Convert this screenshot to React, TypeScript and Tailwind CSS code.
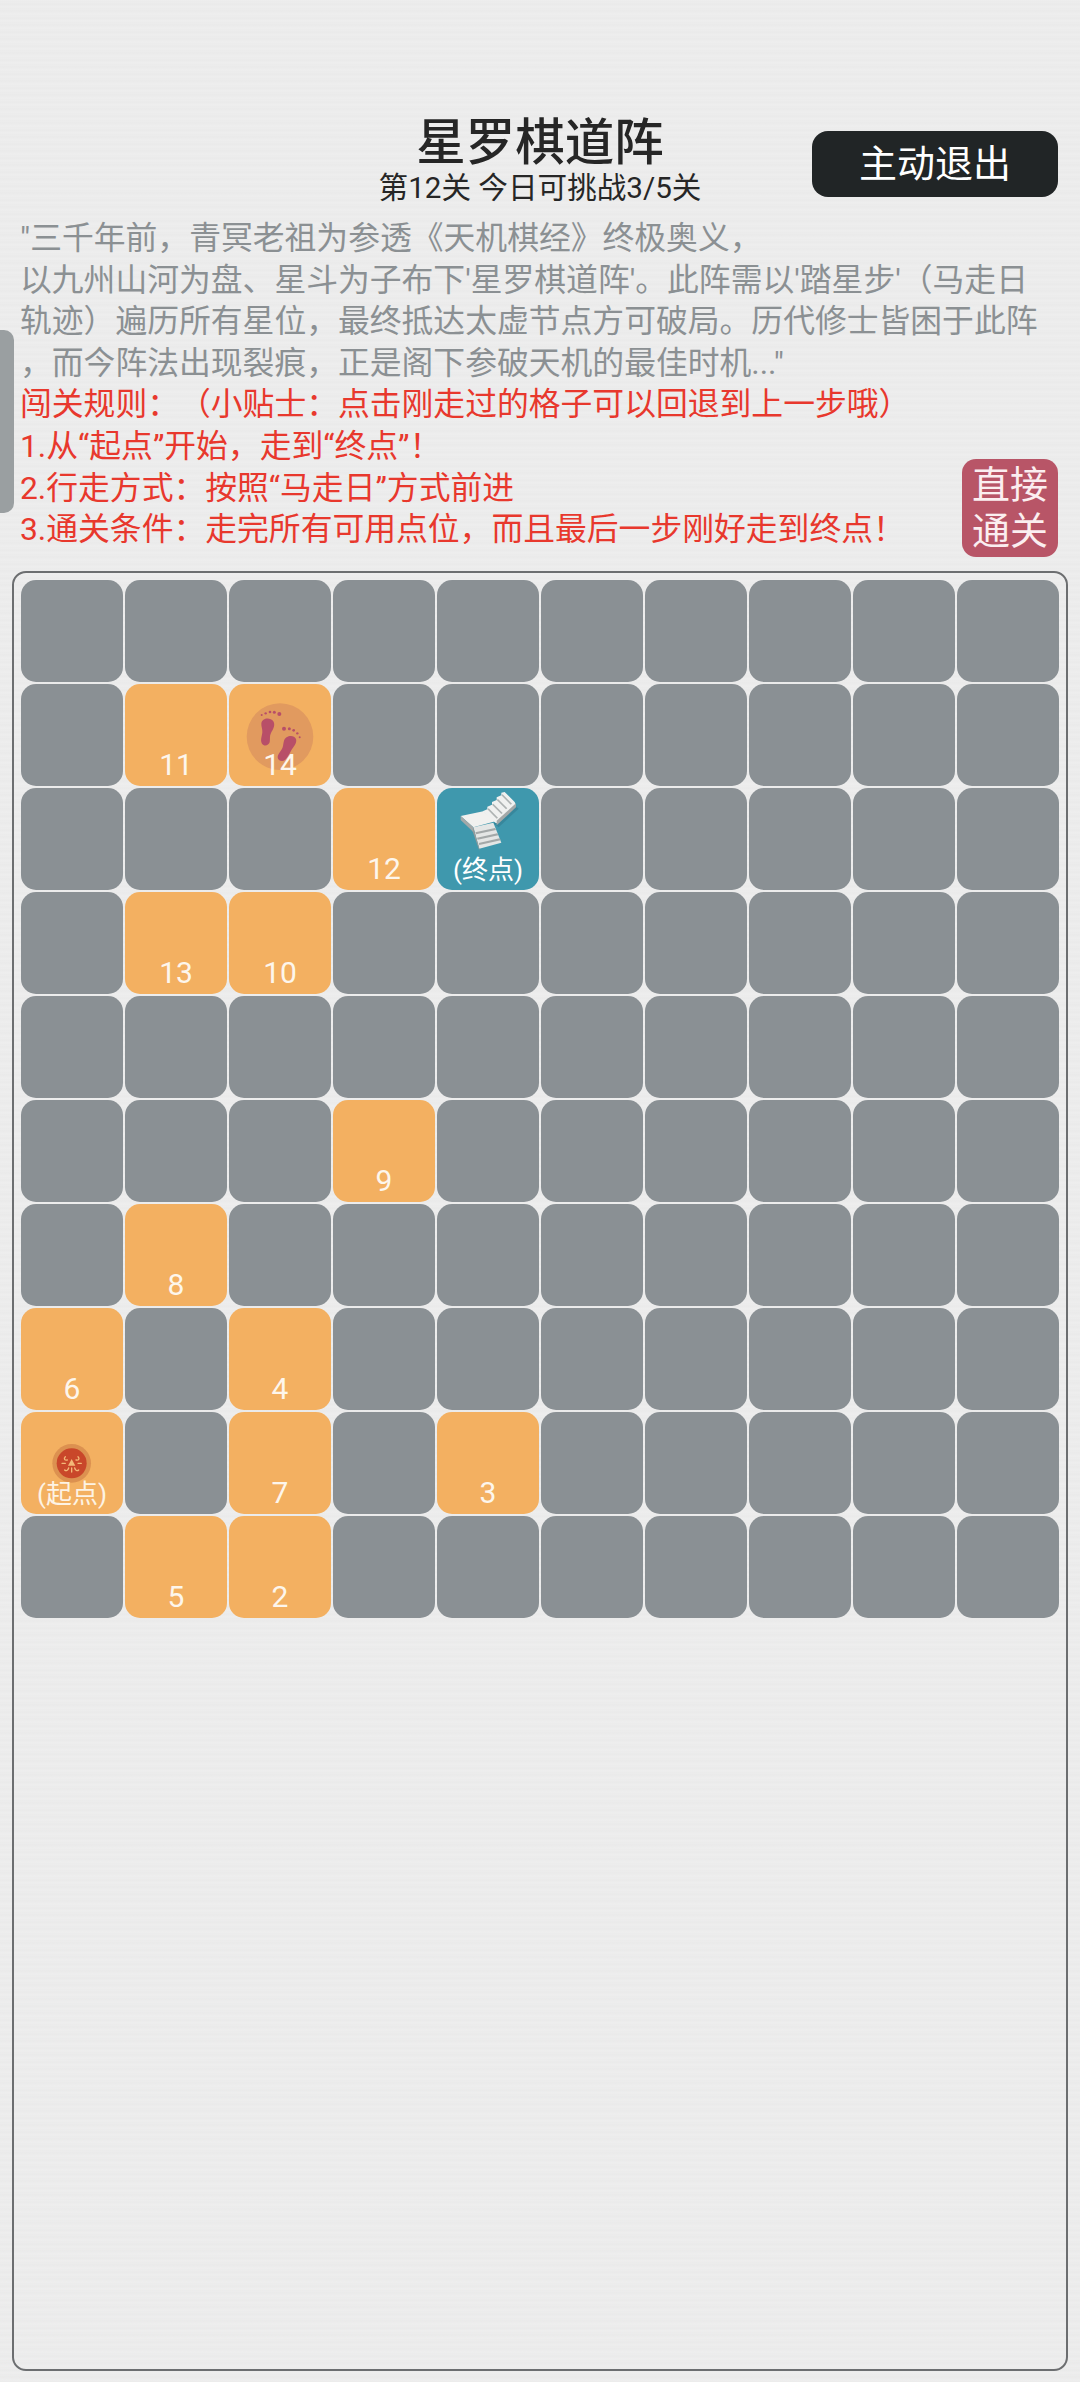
import React from "react";

const orange: Record<string, string> = {
  "1-1": "11", "1-2": "14", "2-3": "12", "3-1": "13", "3-2": "10", "5-3": "9",
  "6-1": "8", "7-0": "6", "7-2": "4", "8-2": "7", "8-4": "3", "9-1": "5", "9-2": "2",
};

function Feet() {
  return (
    <svg className="absolute inset-0" width="102" height="102" viewBox="27 12 306 306">
      <circle cx="180" cy="170" r="100" fill="#e19a5f" />
      <g fill="#b84f68">
        <path d="M124 130c2-16 26-20 36-6 7 11-1 25-7 35-5 9-2 19-4 28-3 10-17 13-23 4-6-10 0-22 1-34 1-10-4-17-3-27z" />
        <path d="M192 182c4-16 30-20 36-5 4 12-8 24-14 34-6 11-10 20-19 29-8 7-22 2-22-8 0-11 12-19 15-30 2-7 2-13 4-20z" />
        <circle cx="178" cy="102" r="6" />
        <circle cx="163" cy="97" r="4.5" />
        <circle cx="150" cy="96" r="4" />
        <circle cx="137" cy="100" r="3.5" />
        <circle cx="125" cy="105" r="3" />
        <circle cx="192" cy="146" r="6" />
        <circle cx="208" cy="146" r="4.5" />
        <circle cx="221" cy="151" r="4" />
        <circle cx="232" cy="160" r="3.5" />
        <circle cx="239" cy="172" r="3" />
      </g>
    </svg>
  );
}

function Stairs() {
  return (
    <svg className="absolute inset-0" width="102" height="102" viewBox="21 24 306 306">
      <path d="M190 130l66-52 10 8-60 56z" fill="#37879c" />
      <path d="M92 108l68-14 36 30-66 18z" fill="#f1f1ef" />
      <path d="M92 108l38 34 0 14-38-36z" fill="#a3a8a8" />
      <path d="M130 142l60-14 24 60-66 18z" fill="#e4e6e5" />
      <path d="M130 142l18 64 0 6-20-58z" fill="#959a9a" />
      <path d="M136 157l59-13 3 6-60 13zM141 173l61-13 3 6-62 13zM146 189l63-14 3 6-64 14z" fill="#a3a8a8" />
      <path d="M158 94l14-6 0-8 14-6 0-8 14-6 0-8 14-6 0-8 10-2 30 30 4 10-58 54-4-2z" fill="#f0f1f0" />
      <path d="M200 122l58-52 0 12-58 54z" fill="#a3a8a8" />
      <path d="M172 88l28 28 4-3-28-28zM186 74l28 28 4-3-28-28zM200 60l28 28 4-3-28-28zM214 46l28 28 4-3-28-28z" fill="#aeb3b3" />
    </svg>
  );
}

function Start() {
  return (
    <svg className="absolute inset-0" width="102" height="102" viewBox="3 6 306 306">
      <circle cx="155" cy="160" r="58" fill="#dc9150" />
      <circle cx="155" cy="160" r="45" fill="#c9472a" />
      <path d="M155 147l11 20h-22z" fill="#f3b878" />
      <path d="M136 140c-6 6-2 12 6 10M174 140c6 6 2 12-6 10M126 160h10M184 160h-10M134 180c4 4 10 2 12-6M176 180c-4 4-10 2-12-6M155 174v12" stroke="#f3b878" strokeWidth="4" fill="none" strokeLinecap="round" />
    </svg>
  );
}

function Cell({ r, c }: { r: number; c: number }) {
  const key = `${r}-${c}`;
  const isStart = key === "8-0";
  const isEnd = key === "2-4";
  const num = orange[key];
  const bg = isEnd ? "bg-[#3f98ad]" : isStart || num ? "bg-[#f3b061]" : "bg-[#8a9094]";
  return (
    <div className={`relative flex h-[102px] w-[102px] items-end justify-center rounded-[15px] pb-[2px] text-white ${bg}`}>
      {num === "14" && <Feet />}
      {isEnd && <Stairs />}
      {isStart && <Start />}
      {num && <span className="relative text-[30px] leading-[38px] text-[#fdf6ec]">{num}</span>}
      {isEnd && <span className="relative text-[26px] leading-[36px]">(终点)</span>}
      {isStart && <span className="relative text-[26px] leading-[36px] text-[#fdf3e4]">(起点)</span>}
    </div>
  );
}

export default function App() {
  const rows = Array.from({ length: 10 }, (_, i) => i);
  return (
    <div
      lang="zh-CN"
      className="relative flex h-[2382px] w-[1080px] flex-col overflow-hidden bg-[#ececec] bg-[repeating-linear-gradient(0deg,#ebebeb_0px,#eeeeee_2px,#eaeaea_5px,#ededed_7px)] pt-[115px] font-['Roboto','Noto_Sans_CJK_SC',sans-serif] [text-spacing-trim:space-all]"
    >
      <div className="absolute left-0 top-[330px] h-[183px] w-[14px] rounded-r-[10px] bg-[#9a9fa1]" />

      <header className="grid grid-cols-[1fr_auto_1fr] items-start">
        <div />
        <div className="flex flex-col items-center text-[#262626]">
          <h1 className="text-[49.5px] font-medium leading-[56px]">星罗棋道阵</h1>
          <p className="mt-[-2px] text-[29.6px] leading-[38px]">第12关 今日可挑战3/5关</p>
        </div>
        <button className="mt-[16px] mr-[22px] h-[66px] w-[246px] justify-self-end rounded-[16px] bg-[#212526] text-[38px] leading-[66px] text-white">
          主动退出
        </button>
      </header>

      <section className="mt-[11px] px-[20px] text-[31.8px] leading-[41.6px] whitespace-nowrap">
        <p className="text-[#8b9093]">
          "三千年前，青冥老祖为参透《天机棋经》终极奥义，
          <br />
          以九州山河为盘、星斗为子布下'星罗棋道阵'。此阵需以'踏星步'（马走日
          <br />
          轨迹）遍历所有星位，最终抵达太虚节点方可破局。历代修士皆困于此阵
          <br />
          ，而今阵法出现裂痕，正是阁下参破天机的最佳时机..."
        </p>
        <div className="flex items-end justify-between">
          <div className="text-[#e8382d]">
            <p>闯关规则：（小贴士：点击刚走过的格子可以回退到上一步哦）</p>
            <p>1.从“起点”开始，走到“终点”！</p>
            <p>2.行走方式：按照“马走日”方式前进</p>
            <p>3.通关条件：走完所有可用点位，而且最后一步刚好走到终点！</p>
          </div>
          <button className="mr-[2px] mb-[-6px] h-[98px] w-[96px] rounded-[14px] bg-[#b85567] text-[38px] leading-[46px] text-[#fbeef0]">
            直接
            <br />
            通关
          </button>
        </div>
      </section>

      <main className="mx-[12px] mt-[20px] h-[1800px] rounded-[14px] border-2 border-[#6c6e70] px-[7px] pt-[7px]">
        <div className="grid grid-cols-[repeat(10,102px)] gap-[2px]">
          {rows.map((r) => rows.map((c) => <Cell key={`${r}-${c}`} r={r} c={c} />))}
        </div>
      </main>
    </div>
  );
}
